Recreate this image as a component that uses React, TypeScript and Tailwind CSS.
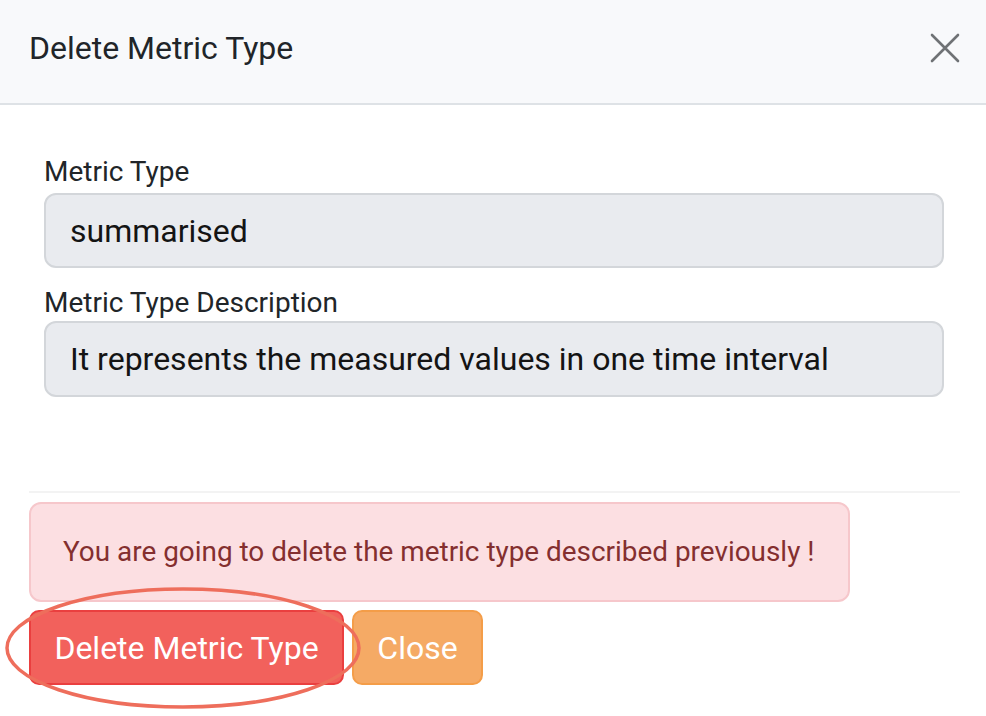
export default function App() {
  return (
    <div className="relative h-[716px] w-[986px] overflow-hidden bg-white font-['Roboto',sans-serif]">
      <div className="flex h-[105px] items-center justify-between border-b-2 border-[#dee2e6] bg-[#f8f9fb] pl-[29px] pr-[24px]">
        <h1 className="pb-[8px] text-[32px] leading-none text-[#212529]">Delete Metric Type</h1>
        <button type="button" aria-label="Close" className="mb-[8px] flex h-[34px] w-[34px] items-center justify-center">
          <svg width="30" height="30" viewBox="0 0 30 30" fill="none" stroke="#6f7275" strokeWidth="2.6" strokeLinecap="round">
            <path d="M2 2L28 28M28 2L2 28" />
          </svg>
        </button>
      </div>

      <div className="pl-[44px] pr-[42px] pt-[50px]">
        <label className="block text-[28px] leading-[34px] text-[#212529]">Metric Type</label>
        <div className="mt-[4px] flex h-[75px] items-center rounded-[12px] border-2 border-[#d3d6da] bg-[#e9ebef] px-[24px] text-[32px] text-[#141414]">
          summarised
        </div>
        <label className="mt-[18px] block text-[28px] leading-[34px] text-[#212529]">Metric Type Description</label>
        <div className="mt-[1px] flex h-[76px] items-center rounded-[12px] border-2 border-[#d3d6da] bg-[#e9ebef] px-[24px] text-[32px] text-[#141414]">
          It represents the measured values in one time interval
        </div>
      </div>

      <div className="mx-[29px] mt-[94px] w-[931px] border-t-2 border-[#f3f3f3]">
        <div className="mt-[9px] flex h-[100px] w-[821px] items-center whitespace-nowrap rounded-[12px] border-2 border-[#f6c7cb] bg-[#fcdfe2] pl-[32px] pr-[8px] text-[27.9px] text-[#842f2f]">
          You are going to delete the metric type described previously !
        </div>
        <div className="mt-[8px] flex gap-[8px]">
          <button
            type="button"
            className="flex h-[75px] w-[315px] items-center justify-center rounded-[10px] border-2 border-[#ea3f3f] bg-[#f2615c] text-[32px] text-white"
          >
            Delete Metric Type
          </button>
          <button
            type="button"
            className="flex h-[75px] w-[131px] items-center justify-center rounded-[10px] border-2 border-[#f49d48] bg-[#f5aa65] text-[32px] text-white"
          >
            Close
          </button>
        </div>
      </div>

      <svg className="pointer-events-none absolute left-[4px] top-[586px]" width="358" height="124" viewBox="0 0 358 124" fill="none">
        <ellipse cx="179" cy="62" rx="176" ry="59" stroke="#ee6e5c" strokeWidth="3.5" />
      </svg>
    </div>
  );
}
